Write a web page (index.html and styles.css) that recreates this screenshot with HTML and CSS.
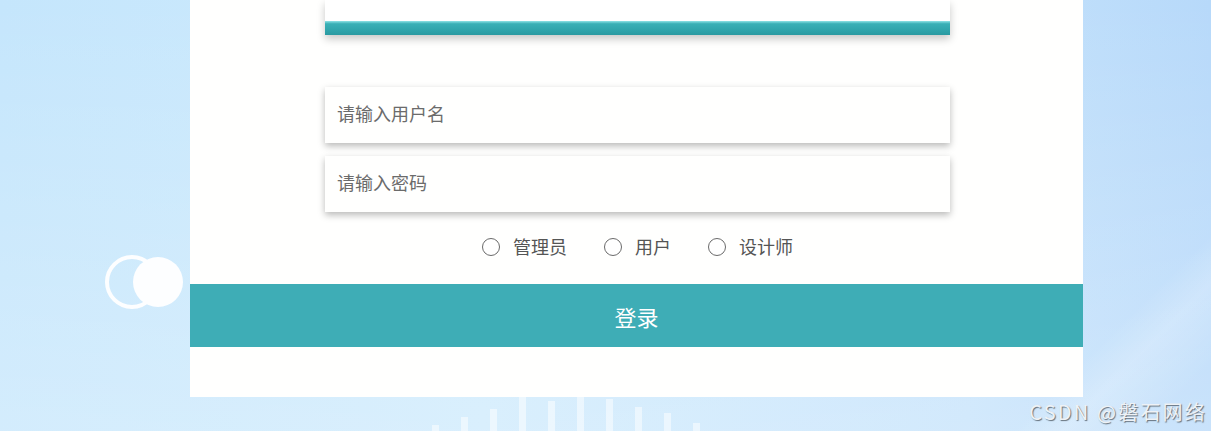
FILE: index.html
```html
<!DOCTYPE html>
<html lang="zh-CN">
<head>
<meta charset="utf-8">
<title>登录</title>
<link rel="stylesheet" href="styles.css">
</head>
<body>
<div class="page">
  <div class="deco-circles">
    <span class="ring"></span>
    <span class="dot"></span>
  </div>
  <div class="deco-bars">
    <span style="height:6px"></span>
    <span style="height:14px"></span>
    <span style="height:22px"></span>
    <span style="height:34px"></span>
    <span style="height:30px"></span>
    <span style="height:34px"></span>
    <span style="height:32px"></span>
    <span style="height:24px"></span>
    <span style="height:18px"></span>
    <span style="height:8px"></span>
  </div>
  <div class="card">
    <div class="head"><div class="head-bar"></div></div>
    <div class="fields">
      <input class="field" type="text" placeholder="请输入用户名">
      <input class="field" type="password" placeholder="请输入密码">
    </div>
    <div class="roles">
      <label class="role"><span class="radio"></span><span class="role-text">管理员</span></label>
      <label class="role"><span class="radio"></span><span class="role-text">用户</span></label>
      <label class="role"><span class="radio"></span><span class="role-text">设计师</span></label>
    </div>
    <button class="login" type="button">登录</button>
  </div>
  <div class="watermark">CSDN @磐石网络</div>
</div>
</body>
</html>
```
FILE: styles.css
```css
html, body {
  margin: 0;
  padding: 0;
}
body {
  font-family: "Noto Sans CJK SC", "Noto Sans", sans-serif;
  overflow: hidden;
}
.page {
  position: relative;
  width: 1211px;
  height: 431px;
  overflow: hidden;
  background:
    linear-gradient(135deg, rgba(255,255,255,0) 0%, rgba(255,255,255,0) 88%, rgba(255,255,255,0.2) 91%, rgba(255,255,255,0) 96%),
    linear-gradient(180deg, rgba(255,255,255,0) 0%, rgba(255,255,255,0.25) 100%),
    linear-gradient(90deg, #c5e6fc 0%, #cdeafd 40%, #c4e2fb 80%, #b7d9fa 100%);
}
.card {
  margin-left: 190px;
  width: 893px;
  height: 397px;
  background: #fffffe;
  display: flex;
  flex-direction: column;
  position: relative;
  z-index: 1;
}
.head {
  margin: 0 133px 0 135px;
  height: 35px;
  background: #fff;
  display: flex;
  flex-direction: column;
  justify-content: flex-end;
  box-shadow: 0 4px 8px rgba(0,0,0,0.22);
}
.head-bar {
  height: 14px;
  background: linear-gradient(180deg, #8fe3e6 0%, #3ab0b6 20%, #2fa3aa 70%, #2a9aa1 100%);
}
.fields {
  margin: 52px 133px 0 135px;
  display: flex;
  flex-direction: column;
  gap: 13px;
}
.field {
  display: block;
  box-sizing: border-box;
  width: 100%;
  height: 56px;
  border: none;
  outline: none;
  padding: 0 12px 4px;
  background: #fffffe;
  font-family: "Noto Sans CJK SC", sans-serif;
  font-size: 18px;
  color: #555;
  box-shadow: 0 3px 7px rgba(0,0,0,0.28);
}
.field::placeholder {
  color: #6b6b6b;
}
.roles {
  margin-top: 22px;
  height: 28px;
  display: flex;
  justify-content: center;
  align-items: center;
  gap: 37px;
  padding-left: 2px;
}
.role {
  display: flex;
  align-items: center;
  gap: 13px;
  font-size: 18px;
  color: #555;
  line-height: 26px;
  padding-bottom: 4px;
}
.radio {
  box-sizing: border-box;
  width: 18px;
  height: 18px;
  border: 1.6px solid #6a6a6a;
  border-radius: 50%;
  background: #fff;
  margin-top: 2px;
}
.login {
  margin-top: 22px;
  width: 100%;
  height: 63px;
  border: none;
  background: #3eadb6;
  color: #fff;
  font-family: "Noto Sans CJK SC", sans-serif;
  font-size: 22px;
  padding: 0;
  cursor: pointer;
}
.deco-circles {
  position: absolute;
  left: 105px;
  top: 255px;
  width: 80px;
  height: 54px;
}
.ring {
  position: absolute;
  left: 0;
  top: 0;
  width: 54px;
  height: 54px;
  box-sizing: border-box;
  border: 4px solid #fdfeff;
  border-radius: 50%;
}
.dot {
  position: absolute;
  left: 28px;
  top: 2px;
  width: 50px;
  height: 50px;
  background: #fdfeff;
  border-radius: 50%;
}
.deco-bars {
  position: absolute;
  left: 432px;
  top: 397px;
  width: 300px;
  height: 34px;
  display: flex;
  align-items: flex-end;
  gap: 22px;
}
.deco-bars span {
  width: 7px;
  background: rgba(255,255,255,0.5);
}
.watermark {
  position: absolute;
  right: 4px;
  top: 397px;
  font-family: "Noto Sans CJK SC", "Liberation Sans", sans-serif;
  font-size: 20px;
  color: #eef2f6;
  letter-spacing: 2.2px;
  text-shadow: 1px 1px 1px rgba(80,90,100,0.85);
  z-index: 2;
}
```
